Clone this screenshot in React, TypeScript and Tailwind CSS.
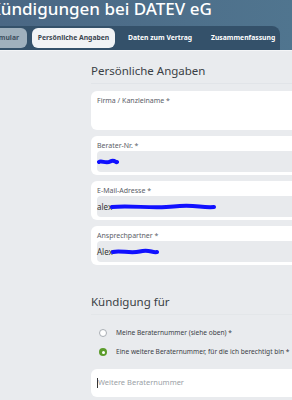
import React from "react";

const FONT = { fontFamily: '"Noto Sans", "Open Sans", sans-serif' };

function Scribble({ w }: { w: number }) {
  return (
    <svg width={w} height="8" viewBox={`0 0 ${w} 8`} className="block">
      <path
        d={`M2 4 C ${w * 0.2} 2, ${w * 0.4} 6, ${w * 0.6} 3.5 S ${w * 0.85} 5, ${w - 2} 4`}
        stroke="#1010ff"
        strokeWidth="4"
        strokeLinecap="round"
        fill="none"
      />
    </svg>
  );
}

function Card({ label, children }: { label: string; children?: React.ReactNode }) {
  return (
    <div className="bg-white rounded-l-md pl-[6px] pt-[5px] pb-[3px]">
      <p className="text-[7px] leading-[10px] text-[#5b6068] whitespace-nowrap">{label}</p>
      {children}
    </div>
  );
}

export default function App() {
  return (
    <div className="w-[292px] h-[400px] overflow-hidden bg-[#e9ebee]" style={FONT}>
      {/* Kopf */}
      <div className="h-[50px] bg-gradient-to-r from-[#4a6784] to-[#50758f] overflow-hidden">
        <div className="h-[26px] overflow-hidden">
          <h1 className="text-white text-[17px] leading-[22px] font-medium ml-[-10px] -mt-[2px] whitespace-nowrap">
            Kündigungen bei DATEV eG
          </h1>
        </div>
        <div className="w-[280px] h-[24px] bg-[#34516a] rounded-tr-lg flex items-center">
          <span className="w-[27px] h-[20px] pr-[8px] rounded-r-md bg-[#9fb0bd] text-[#3e4f5e] text-[6.8px] font-bold flex items-center justify-end overflow-hidden whitespace-nowrap">
            mular
          </span>
          <span className="ml-[5px] w-[83px] h-[20px] rounded-md bg-[#f1f3f5] text-[#3b4650] text-[6.8px] font-bold flex items-center justify-center whitespace-nowrap">
            Persönliche Angaben
          </span>
          <span className="ml-[13px] text-white text-[6.8px] font-bold whitespace-nowrap">
            Daten zum Vertrag
          </span>
          <span className="ml-[19px] text-white text-[6.8px] font-bold whitespace-nowrap">
            Zusammenfassung
          </span>
        </div>
      </div>
      <div className="h-px bg-[#f4f5f7]" />

      {/* Inhalt */}
      <div className="pl-[91px]">
        <h2 className="mt-[12px] text-[11.5px] leading-[16px] text-[#3a3f45] pb-[4px] border-b border-[#e1e4e8] whitespace-nowrap">
          Persönliche Angaben
        </h2>
        <div className="mt-[7px] flex flex-col gap-[6px]">
          <Card label="Firma / Kanzleiname *">
            <div className="h-[21px]" />
          </Card>
          <Card label="Berater-Nr. *">
            <div className="h-[21px] rounded-l-sm bg-[#e8eaed] flex items-center">
              <Scribble w={22} />
            </div>
          </Card>
          <Card label="E-Mail-Adresse *">
            <div className="h-[21px] rounded-l-sm bg-[#e8eaed] flex items-center text-[8px] text-[#333]">
              <span>alex</span>
              <span className="-ml-[2px]"><Scribble w={106} /></span>
            </div>
          </Card>
          <Card label="Ansprechpartner *">
            <div className="h-[21px] rounded-l-sm bg-[#e8eaed] flex items-center text-[8px] text-[#333]">
              <span>Alex</span>
              <span className="-ml-[2px]"><Scribble w={48} /></span>
            </div>
          </Card>
        </div>

        <h2 className="mt-[29px] text-[11.5px] leading-[16px] text-[#3a3f45] pb-[4px] border-b border-[#e3e6e9] whitespace-nowrap">
          Kündigung für
        </h2>

        <div className="mt-[12px] pl-[8px] flex flex-col gap-[7px]">
          <label className="h-[12px] flex items-center gap-[9px] text-[6.6px] text-[#3b4046] whitespace-nowrap">
            <span className="w-[8px] h-[8px] shrink-0 rounded-full bg-white border border-[#a9aeb4]" />
            Meine Beraternummer (siehe oben) *
          </label>
          <label className="h-[12px] flex items-center gap-[9px] text-[6.6px] text-[#3b4046] whitespace-nowrap">
            <span className="w-[8px] h-[8px] shrink-0 rounded-full bg-[#5c9c2c] flex items-center justify-center">
              <span className="w-[3px] h-[3px] rounded-full bg-white" />
            </span>
            Eine weitere Beraternummer, für die ich berechtigt bin *
          </label>
        </div>

        <div className="mt-[11px] h-[28px] bg-white rounded-l-md flex items-center pl-[6px] text-[7.5px] text-[#9aa0a6] whitespace-nowrap">
          <span className="w-px h-[10px] bg-[#333]" />
          Weitere Beraternummer
        </div>
      </div>
    </div>
  );
}
